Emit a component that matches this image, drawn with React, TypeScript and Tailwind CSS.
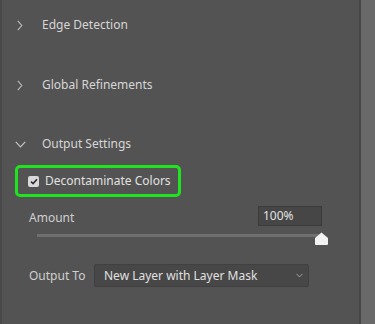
const font = { fontFamily: '"Noto Sans", "Open Sans", sans-serif' };

const ChevronRight = () => (
  <svg width="6" height="11" viewBox="0 0 6 11" fill="none">
    <path d="M0.8 0.8 L4.8 5.5 L0.8 10.2" stroke="#bdbdbd" strokeWidth="1.1" />
  </svg>
);

const ChevronDown = ({ w = 11, h = 7, c = "#c4c4c4" }: { w?: number; h?: number; c?: string }) => (
  <svg width={w} height={h} viewBox="0 0 11 7" fill="none">
    <path d="M0.8 0.8 L5.5 5.8 L10.2 0.8" stroke={c} strokeWidth="1.2" />
  </svg>
);

const SectionHeader = ({ title, open, className }: { title: string; open?: boolean; className: string }) => (
  <div className={"flex items-center h-[20px] " + className}>
    <div className="w-[40px] flex items-center pl-[13px]">
      {open ? <ChevronDown /> : <span className="pl-[2px] flex"><ChevronRight /></span>}
    </div>
    <span className="text-[12px] text-[#d6d6d6] whitespace-nowrap">{title}</span>
  </div>
);

export default function App() {
  return (
    <div className="flex w-[375px] h-[324px] overflow-hidden" style={font}>
      <div className="w-[359px] h-full bg-[#535353] border-l-2 border-[#494949] flex flex-col">
        <SectionHeader title="Edge Detection" className="mt-[15px]" />
        <SectionHeader title="Global Refinements" className="mt-[40px]" />
        <SectionHeader title="Output Settings" open className="mt-[39px]" />

        <div className="mt-[11px] ml-[13px] w-[166px] h-[32px] border-[3px] border-[#1fe31f] rounded-[5px] flex items-center pl-[10px] gap-[6px]">
          <div className="w-[11px] h-[11px] rounded-[2px] bg-[#d9d9d9] flex items-center justify-center">
            <svg width="8" height="7" viewBox="0 0 8 7" fill="none">
              <path d="M1 3.6 L3.1 5.6 L7 1.2" stroke="#2e2e2e" strokeWidth="1.6" />
            </svg>
          </div>
          <span className="text-[12px] text-[#e0e0e0] whitespace-nowrap">Decontaminate Colors</span>
        </div>

        <div className="mt-[9px] ml-[27px] w-[293px] h-[20px] flex items-center justify-between">
          <span className="text-[12px] text-[#cfcfcf] pt-[3px]">Amount</span>
          <div className="w-[64px] h-[20px] bg-[#464646] border border-[#3b3b3b] flex items-center pl-[4px] text-[12px] text-[#e2e2e2]">
            100%
          </div>
        </div>

        <div className="relative mt-[6px] ml-[35px] w-[285px] h-[14px]">
          <div className="absolute left-0 right-0 top-[2px] h-[3px] bg-[#6f6f6f]" />
          <svg className="absolute right-[-7px] top-0" width="15" height="14" viewBox="0 0 15 14">
            <path d="M7.5 0.5 L14 6 V12 Q14 13 13 13 H2 Q1 13 1 12 V6 Z" fill="#f2f2f2" />
          </svg>
        </div>

        <div className="mt-[18px] ml-[27px] flex items-center">
          <span className="w-[65px] text-[12px] text-[#cfcfcf] whitespace-nowrap">Output To</span>
          <div className="w-[215px] h-[23px] bg-[#474747] border border-[#404040] rounded-[2px] flex items-center justify-between pl-[9px] pr-[5px]">
            <span className="text-[12px] text-[#e0e0e0] whitespace-nowrap">New Layer with Layer Mask</span>
            <ChevronDown w={7} h={5} c="#bdbdbd" />
          </div>
        </div>
      </div>
      <div className="w-[2px] h-full bg-[#474747]" />
      <div className="flex-1 h-full bg-[#696969]" />
    </div>
  );
}
